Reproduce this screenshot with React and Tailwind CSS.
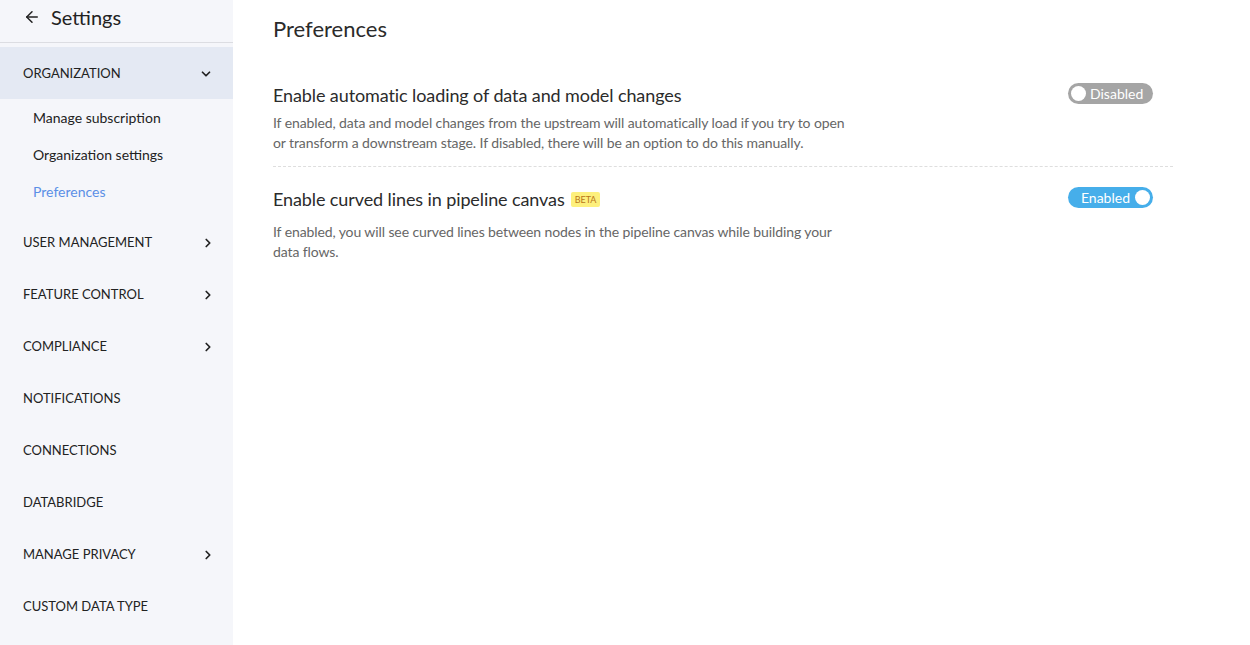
import { ArrowLeft, ChevronDown, ChevronRight } from "lucide-react";

const sections = [
    { label: "USER MANAGEMENT", arrow: true },
    { label: "FEATURE CONTROL", arrow: true },
    { label: "COMPLIANCE", arrow: true },
    { label: "NOTIFICATIONS" },
    { label: "CONNECTIONS" },
    { label: "DATABRIDGE" },
    { label: "MANAGE PRIVACY", arrow: true },
    { label: "CUSTOM DATA TYPE" },
];

function Toggle({ on }) {
    if (on) {
        return (
            <div className="w-[85px] h-[21px] rounded-full bg-[#46aeea] flex items-center justify-end pr-[3px] gap-[5px]">
                <span className="text-white text-[14px] leading-none">Enabled</span>
                <span className="w-[15px] h-[15px] rounded-full bg-white" />
            </div>
        );
    }
    return (
        <div className="w-[85px] h-[21px] rounded-full bg-[#a5a5a5] flex items-center pl-[3px] gap-[4px]">
            <span className="w-[15px] h-[15px] rounded-full bg-white" />
            <span className="text-white text-[14px] leading-none">Disabled</span>
        </div>
    );
}

export default function App() {
    return (
        <div className="flex w-[1250px] h-[645px] bg-white text-[#2b2b2b] overflow-hidden" style={{ fontFamily: "Lato, 'Open Sans', sans-serif" }}>
            <aside className="w-[233px] shrink-0 bg-[#f5f6fa] flex flex-col">
                <div className="h-[42px] flex items-center gap-[10px] pl-[23px] pb-[9px] text-[20px] text-[#222]">
                    <ArrowLeft size={18} strokeWidth={2} />
                    <span>Settings</span>
                </div>
                <div className="h-px bg-[#dcdde2]" />
                <div className="mt-[4px] h-[52px] pt-[2px] bg-[#e4e9f3] flex items-center justify-between pl-[23px] pr-[20px] text-[13px] text-[#222]">
                    <span>ORGANIZATION</span>
                    <ChevronDown size={14} strokeWidth={3} />
                </div>
                <div className="flex flex-col pl-[33px] text-[14px]">
                    <div className="h-[37px] flex items-center text-[#222]">Manage subscription</div>
                    <div className="h-[37px] flex items-center text-[#222]">Organization settings</div>
                    <div className="h-[37px] flex items-center text-[#5b8fe6]">Preferences</div>
                </div>
                <div className="flex flex-col pt-[7px]">
                    {sections.map((s) => (
                        <div key={s.label} className="h-[52px] flex items-center justify-between pl-[23px] pr-[18px] text-[13px] text-[#222]">
                            <span>{s.label}</span>
                            {s.arrow && <ChevronRight size={14} strokeWidth={3} />}
                        </div>
                    ))}
                </div>
            </aside>
            <main className="flex-1 pl-[40px] pr-[77px]">
                <h1 className="text-[22px] text-[#2b2b2b] pt-[16px] leading-[26px]">Preferences</h1>
                <div className="mt-[41px] flex justify-between border-b border-dashed border-[#dedede] pb-[13px]">
                    <div>
                        <h2 className="text-[18px] leading-[24px] text-[#2b2b2b] tracking-[-0.1px]">Enable automatic loading of data and model changes</h2>
                        <p className="mt-[6px] w-[585px] text-[14px] leading-[20px] text-[#666] tracking-[-0.1px]">
                            If enabled, data and model changes from the upstream will automatically load if you try to open or transform a downstream stage. If disabled, there will be an option to do this manually.
                        </p>
                    </div>
                    <div className="pr-[20px]">
                        <Toggle on={false} />
                    </div>
                </div>
                <div className="mt-[20px] flex justify-between">
                    <div>
                        <h2 className="flex items-center gap-[6px] text-[18px] leading-[24px] text-[#2b2b2b] tracking-[-0.1px]">
                            Enable curved lines in pipeline canvas
                            <span className="bg-[#fdf07d] text-[#b9761a] text-[9px] leading-none px-[4px] py-[3px] rounded-[2px] tracking-normal">BETA</span>
                        </h2>
                        <p className="mt-[11px] w-[585px] text-[14px] leading-[20px] text-[#666] tracking-[-0.1px]">
                            If enabled, you will see curved lines between nodes in the pipeline canvas while building your data flows.
                        </p>
                    </div>
                    <div className="pr-[20px]">
                        <Toggle on />
                    </div>
                </div>
            </main>
        </div>
    );
}
